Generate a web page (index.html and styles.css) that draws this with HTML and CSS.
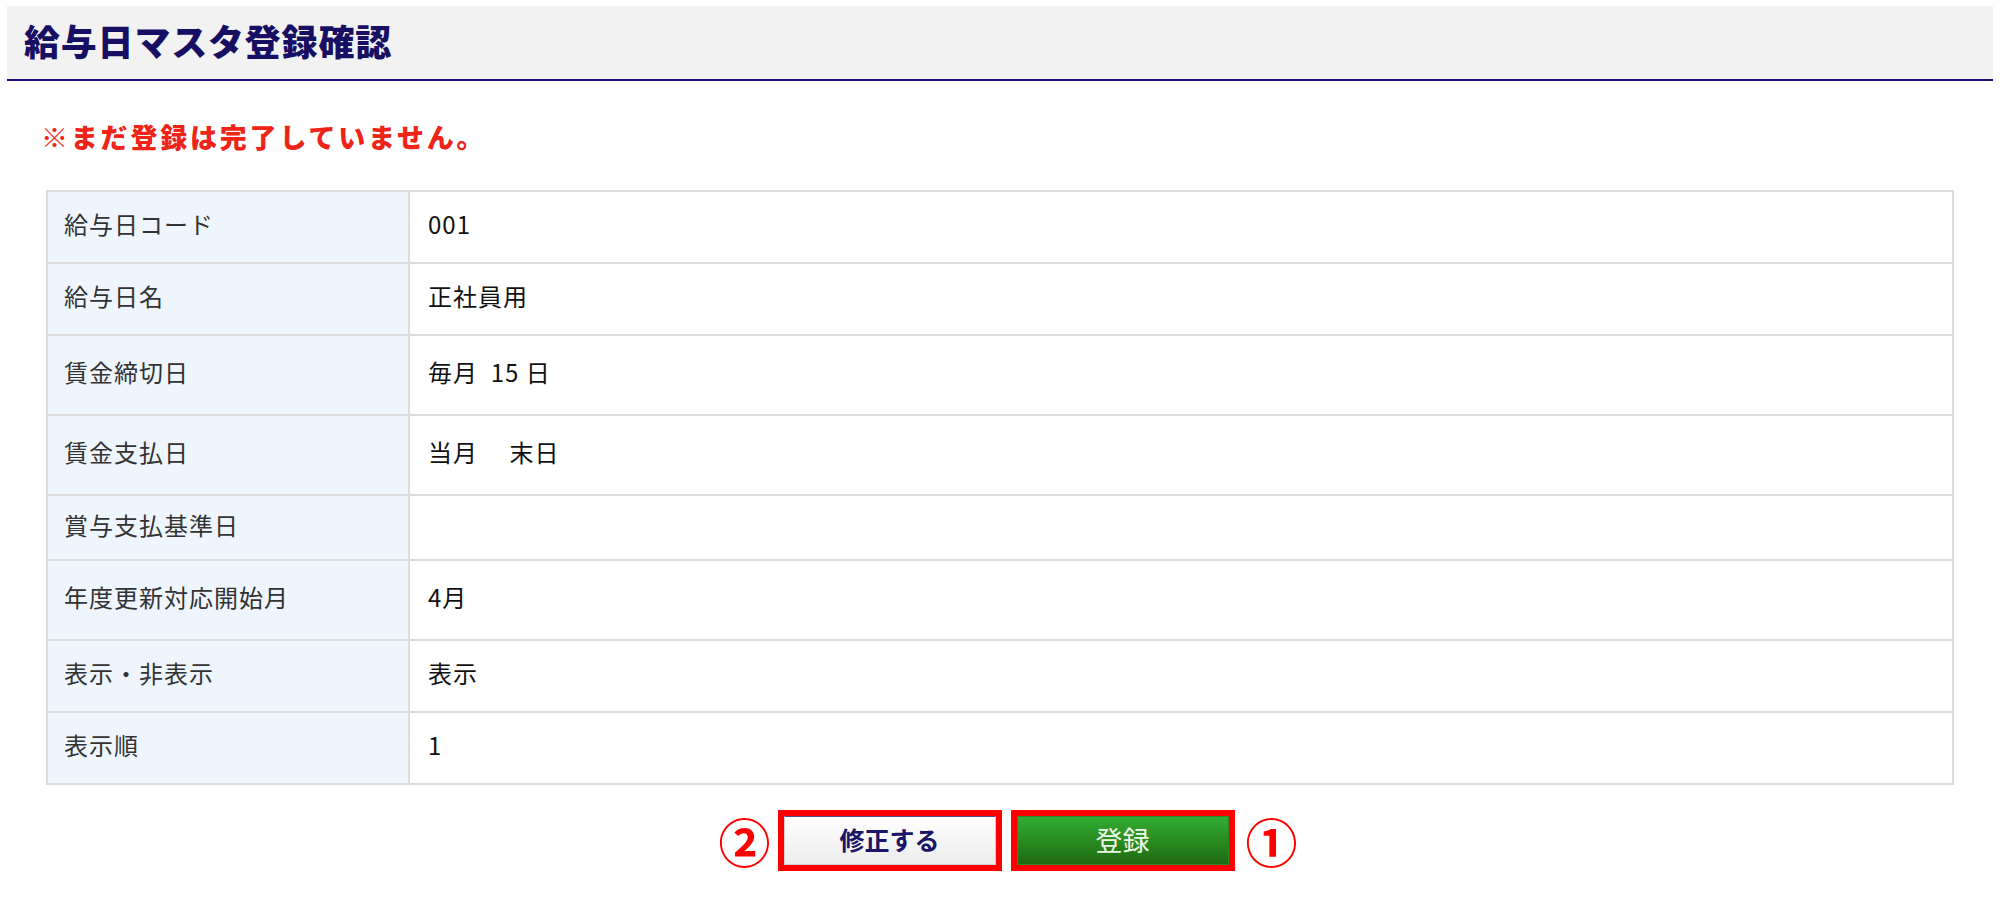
FILE: index.html
```html
<!DOCTYPE html>
<html lang="ja">
<head>
<meta charset="utf-8">
<title>給与日マスタ登録確認</title>
<link rel="stylesheet" href="styles.css">
</head>
<body>
<div class="page">
  <header class="page-header">
    <h1 class="page-title">給与日マスタ登録確認</h1>
  </header>
  <p class="warning">※まだ登録は完了していません。</p>
  <table class="confirm-table">
    <tbody>
      <tr class="row-a"><th>給与日コード</th><td>001</td></tr>
      <tr class="row-a"><th>給与日名</th><td>正社員用</td></tr>
      <tr class="row-b"><th>賃金締切日</th><td>毎月&nbsp;&nbsp;15&nbsp;日</td></tr>
      <tr class="row-b"><th>賃金支払日</th><td>当月　&nbsp;末日</td></tr>
      <tr class="row-c"><th>賞与支払基準日</th><td></td></tr>
      <tr class="row-b"><th>年度更新対応開始月</th><td>4月</td></tr>
      <tr class="row-a"><th>表示・非表示</th><td>表示</td></tr>
      <tr class="row-a"><th>表示順</th><td>1</td></tr>
    </tbody>
  </table>
  <div class="actions">
    <span class="marker">②</span>
    <span class="highlight"><button class="btn btn-edit" type="button">修正する</button></span>
    <span class="highlight"><button class="btn btn-submit" type="button">登録</button></span>
    <span class="marker">①</span>
  </div>
</div>
</body>
</html>
```

FILE: styles.css
```css
* {
  box-sizing: border-box;
}

html, body {
  margin: 0;
  padding: 0;
  background: #ffffff;
}

body {
  font-family: "Noto Sans CJK JP", "Noto Sans", sans-serif;
  color: #222222;
}

.page {
  width: 2000px;
  padding-top: 6px;
}

.page-header {
  margin: 0 7px;
  height: 75px;
  background: #f2f2f2;
  border-bottom: 2px solid #1a1080;
  display: flex;
  align-items: center;
  padding: 0 0 6px 17px;
}

.page-title {
  margin: 0;
  font-size: 36px;
  font-weight: 900;
  color: #170f63;
  letter-spacing: 0.8px;
  line-height: 1;
}

.warning {
  margin: 38px 0 0 41px;
  font-size: 27px;
  font-weight: 900;
  color: #ef2418;
  line-height: 36px;
  letter-spacing: 2.8px;
}

.confirm-table {
  margin: 35px 0 0 46px;
  width: 1908px;
  border-collapse: collapse;
  border: 2px solid #d8d8d8;
  font-size: 24px;
  line-height: 32px;
  letter-spacing: 1px;
}

.confirm-table th,
.confirm-table td {
  border: 2px solid #dcdcdc;
  vertical-align: middle;
  text-align: left;
  font-weight: 400;
  padding: 0 0 6px 0;
}

.confirm-table th {
  width: 362px;
  background: #eef5fd;
  padding-left: 16px;
  color: #333333;
}

.confirm-table td {
  background: #ffffff;
  padding-left: 18px;
  color: #111111;
}

.row-a {
  height: 72px;
}

.row-b {
  height: 80px;
}

.row-c {
  height: 65px;
}

.actions {
  margin-top: 25px;
  display: flex;
  justify-content: center;
  align-items: center;
  padding-left: 16px;
  gap: 9px;
}

.marker {
  font-family: "Noto Sans CJK JP", sans-serif;
  font-size: 52px;
  font-weight: 700;
  color: #ff0000;
  line-height: 1;
}

.marker:first-child {
  margin-right: -2px;
}

.marker:last-child {
  margin-left: 2px;
}

.highlight {
  display: block;
  border: 6px solid #ff0000;
}

.btn {
  display: block;
  width: 212px;
  height: 49px;
  margin: 0;
  font-family: "Noto Sans CJK JP", sans-serif;
  font-size: 25px;
  line-height: 1;
  cursor: pointer;
  padding: 0 0 3px;
}

.btn-edit {
  background: linear-gradient(#ffffff, #ececec);
  border: 1px solid #d0d0d0;
  border-top: 1px solid #4a4a9a;
  color: #1a1566;
  font-weight: 700;
}

.btn-submit {
  background: linear-gradient(#33ad33, #1e6a10);
  border: 1px solid #2a8a2a;
  color: #eef7e6;
  font-weight: 400;
  font-size: 27px;
}
```
